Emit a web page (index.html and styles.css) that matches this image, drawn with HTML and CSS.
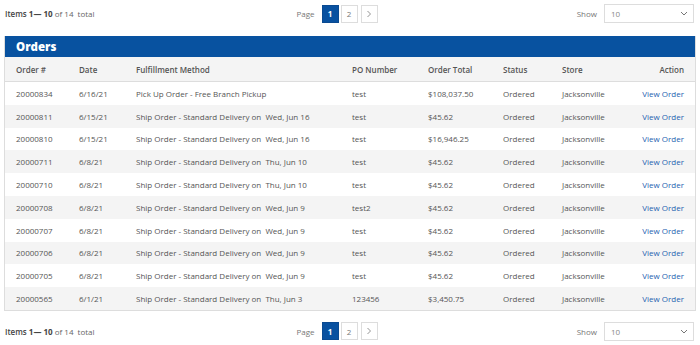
FILE: index.html
```html
<!DOCTYPE html>
<html>
<head>
<meta charset="utf-8">
<link rel="stylesheet" href="styles.css">
</head>
<body>
<div class="toolbar">
  <div class="amount"><span class="lbl">Items</span> <b>1— 10</b> of 14 &nbsp;total</div>
  <div class="pager">
    <span class="label">Page</span>
    <span class="pg active">1</span>
    <span class="pg">2</span>
    <span class="pg next"><svg width="6" height="8" viewBox="0 0 6 8"><path d="M1.5 1 L4.5 4 L1.5 7" fill="none" stroke="#888" stroke-width="0.9"/></svg></span>
  </div>
  <div class="limiter">
    <span class="label">Show</span>
    <span class="select">10<svg width="8" height="5" viewBox="0 0 8 5"><path d="M1 1 L4 4 L7 1" fill="none" stroke="#666" stroke-width="0.9"/></svg></span>
  </div>
</div>

<div class="panel">
  <div class="panel-title">Orders</div>
  <table class="orders">
    <thead>
      <tr><th>Order #</th><th>Date</th><th>Fulfillment Method</th><th>PO Number</th><th>Order Total</th><th>Status</th><th>Store</th><th class="act">Action</th></tr>
    </thead>
    <tbody>
      <tr><td>20000834</td><td>6/16/21</td><td>Pick Up Order - Free Branch Pickup</td><td>test</td><td>$108,037.50</td><td>Ordered</td><td>Jacksonville</td><td class="act"><a>View Order</a></td></tr>
      <tr><td>20000811</td><td>6/15/21</td><td>Ship Order - Standard Delivery on &nbsp;Wed, Jun 16</td><td>test</td><td>$45.62</td><td>Ordered</td><td>Jacksonville</td><td class="act"><a>View Order</a></td></tr>
      <tr><td>20000810</td><td>6/15/21</td><td>Ship Order - Standard Delivery on &nbsp;Wed, Jun 16</td><td>test</td><td>$16,946.25</td><td>Ordered</td><td>Jacksonville</td><td class="act"><a>View Order</a></td></tr>
      <tr><td>20000711</td><td>6/8/21</td><td>Ship Order - Standard Delivery on &nbsp;Thu, Jun 10</td><td>test</td><td>$45.62</td><td>Ordered</td><td>Jacksonville</td><td class="act"><a>View Order</a></td></tr>
      <tr><td>20000710</td><td>6/8/21</td><td>Ship Order - Standard Delivery on &nbsp;Thu, Jun 10</td><td>test</td><td>$45.62</td><td>Ordered</td><td>Jacksonville</td><td class="act"><a>View Order</a></td></tr>
      <tr><td>20000708</td><td>6/8/21</td><td>Ship Order - Standard Delivery on &nbsp;Wed, Jun 9</td><td>test2</td><td>$45.62</td><td>Ordered</td><td>Jacksonville</td><td class="act"><a>View Order</a></td></tr>
      <tr><td>20000707</td><td>6/8/21</td><td>Ship Order - Standard Delivery on &nbsp;Wed, Jun 9</td><td>test</td><td>$45.62</td><td>Ordered</td><td>Jacksonville</td><td class="act"><a>View Order</a></td></tr>
      <tr><td>20000706</td><td>6/8/21</td><td>Ship Order - Standard Delivery on &nbsp;Wed, Jun 9</td><td>test</td><td>$45.62</td><td>Ordered</td><td>Jacksonville</td><td class="act"><a>View Order</a></td></tr>
      <tr><td>20000705</td><td>6/8/21</td><td>Ship Order - Standard Delivery on &nbsp;Wed, Jun 9</td><td>test</td><td>$45.62</td><td>Ordered</td><td>Jacksonville</td><td class="act"><a>View Order</a></td></tr>
      <tr><td>20000565</td><td>6/1/21</td><td>Ship Order - Standard Delivery on &nbsp;Thu, Jun 3</td><td>123456</td><td>$3,450.75</td><td>Ordered</td><td>Jacksonville</td><td class="act"><a>View Order</a></td></tr>
    </tbody>
  </table>
</div>

<div class="toolbar bottom">
  <div class="amount"><span class="lbl">Items</span> <b>1— 10</b> of 14 &nbsp;total</div>
  <div class="pager">
    <span class="label">Page</span>
    <span class="pg active">1</span>
    <span class="pg">2</span>
    <span class="pg next"><svg width="6" height="8" viewBox="0 0 6 8"><path d="M1.5 1 L4.5 4 L1.5 7" fill="none" stroke="#888" stroke-width="0.9"/></svg></span>
  </div>
  <div class="limiter">
    <span class="label">Show</span>
    <span class="select">10<svg width="8" height="5" viewBox="0 0 8 5"><path d="M1 1 L4 4 L7 1" fill="none" stroke="#666" stroke-width="0.9"/></svg></span>
  </div>
</div>
</body>
</html>
```
FILE: styles.css
```css
html, body {
  margin: 0;
  padding: 0;
  background: #fff;
}
body {
  font-family: "Open Sans", "Liberation Sans", sans-serif;
  font-size: 8px;
  color: #444;
  padding: 0 4px;
}
.toolbar {
  display: grid;
  grid-template-columns: 1fr auto 1fr;
  align-items: center;
  height: 27px;
}
.toolbar.bottom {
  margin-top: 7px;
}
.amount {
  color: #666;
  padding-left: 1px;
}
.amount .lbl {
  font-weight: 600;
  color: #444;
}
.amount b {
  font-weight: 700;
  color: #444;
}
.pager {
  display: flex;
  align-items: center;
  gap: 2px;
  padding-right: 26px;
}
.label {
  color: #777;
  margin-right: 5px;
}
.pg {
  display: flex;
  align-items: center;
  justify-content: center;
  width: 15px;
  height: 16px;
  border: 1px solid #ddd;
  color: #777;
  background: #fff;
}
.pg.next {
  margin-left: 1px;
}
.pg.active {
  background: #0851a0;
  border-color: #0a4a91;
  color: #fff;
  font-weight: 700;
}
.limiter {
  display: flex;
  justify-content: flex-end;
  align-items: center;
  padding-right: 2px;
}
.limiter .label {
  margin-right: 7px;
}
.select {
  display: flex;
  justify-content: space-between;
  align-items: center;
  width: 77px;
  height: 17px;
  padding: 0 5px 0 6px;
  border: 1px solid #ddd;
  color: #888;
}
.panel {
  margin-top: 9px;
  border: 1px solid #ddd;
  border-top: 0;
}
.panel-title {
  background: #0852a0;
  color: #fff;
  font-size: 11.5px;
  font-weight: 800;
  height: 21px;
  line-height: 21px;
  padding-left: 11px;
}
.orders {
  width: 100%;
  border-collapse: collapse;
}
.orders th {
  background: #f4f4f4;
  color: #555;
  font-weight: 600;
  text-align: left;
  height: 24px;
  padding: 0;
  border-bottom: 1px solid #ddd;
}
.orders td {
  height: 22.8px;
  padding: 0;
  color: #555;
}
.orders tbody tr:nth-child(even) td {
  background: #f4f4f4;
}
.orders th:first-child, .orders td:first-child {
  padding-left: 11px;
  width: 63px;
}
.orders th:nth-child(2), .orders td:nth-child(2) { width: 57px; }
.orders th:nth-child(3), .orders td:nth-child(3) { width: 216px; }
.orders th:nth-child(4), .orders td:nth-child(4) { width: 76px; }
.orders th:nth-child(5), .orders td:nth-child(5) { width: 75px; }
.orders th:nth-child(6), .orders td:nth-child(6) { width: 59px; }
.orders .act {
  text-align: right;
  padding-right: 11px;
}
.orders a {
  color: #1d62b0;
}
```
